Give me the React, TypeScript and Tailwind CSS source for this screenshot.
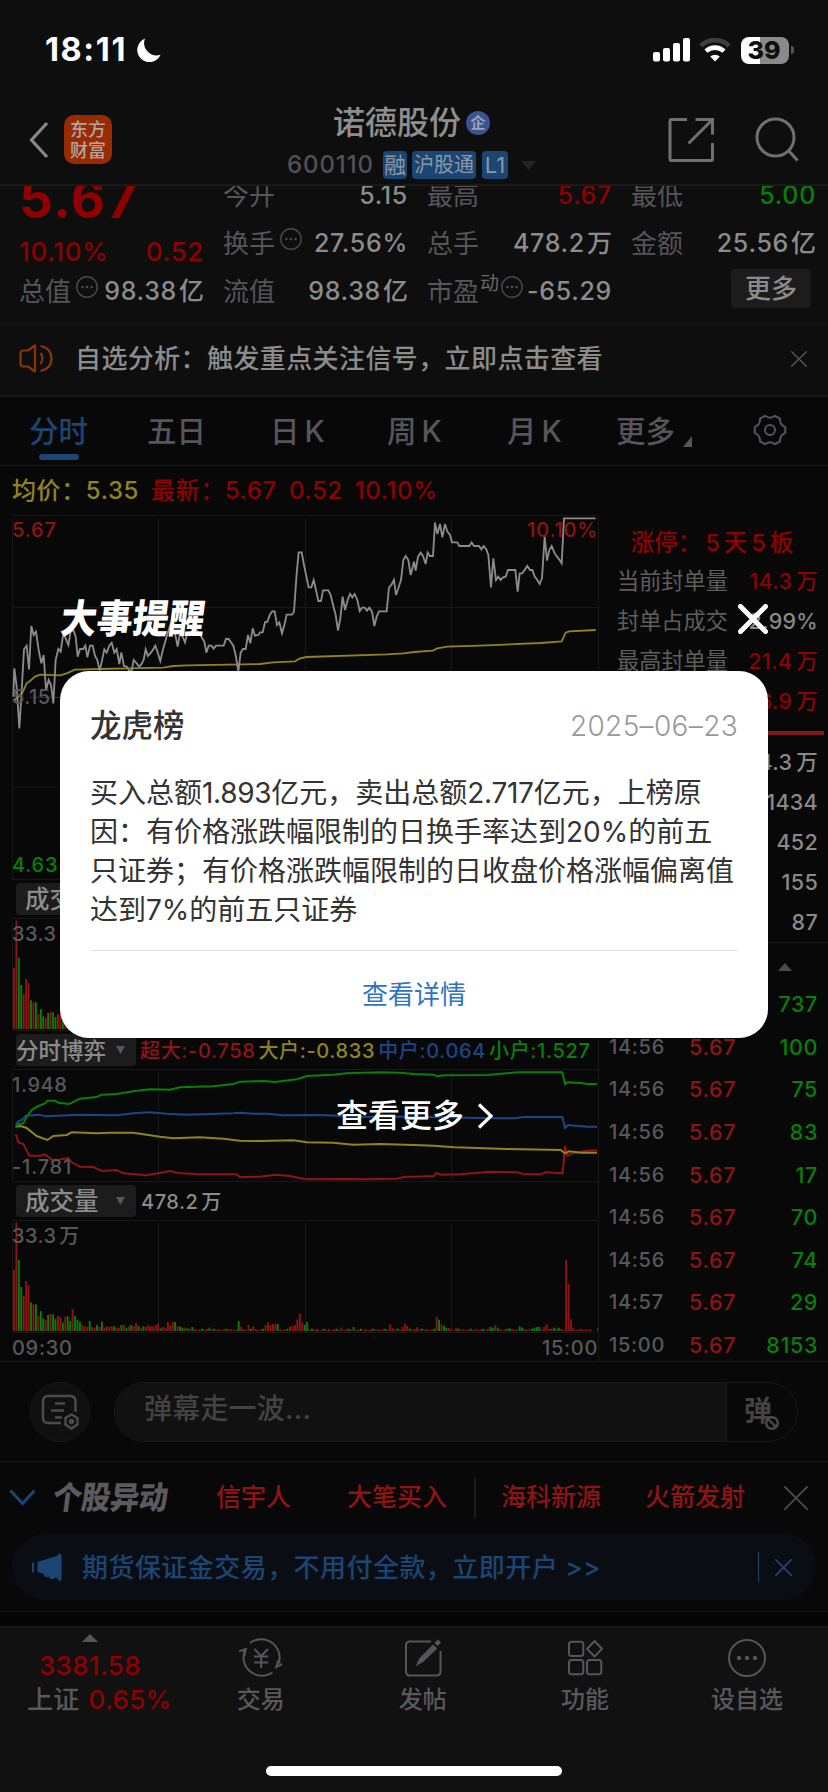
import type { ReactNode } from "react";

type Quote = { label: string; value: string; unit?: string; tone?: string; info?: boolean; sup?: string };

const RED = "text-[#8f0000]";
const GREEN = "text-[#068006]";

const quoteColumns: Quote[][] = [
  [
    { label: "今开", value: "5.15" },
    { label: "换手", value: "27.56%", info: true },
    { label: "流值", value: "98.38", unit: "亿" },
  ],
  [
    { label: "最高", value: "5.67", tone: RED },
    { label: "总手", value: "478.2", unit: "万" },
    { label: "市盈", value: "-65.29", info: true, sup: "动" },
  ],
];

const limitRows = [
  { label: "当前封单量", value: "14.3", unit: "万", tone: RED },
  { label: "封单占成交", value: "2.99%", unit: "", tone: "text-[#8a8a8a]" },
  { label: "最高封单量", value: "21.4", unit: "万", tone: RED },
  { label: "", value: "16.9", unit: "万", tone: RED },
];

const bookRows = [
  ["14.3", "万"],
  ["1434", ""],
  ["452", ""],
  ["155", ""],
  ["87", ""],
];

const ticks = [
  ["14:56", "5.67", "737"],
  ["14:56", "5.67", "100"],
  ["14:56", "5.67", "75"],
  ["14:56", "5.67", "83"],
  ["14:56", "5.67", "17"],
  ["14:56", "5.67", "70"],
  ["14:56", "5.67", "74"],
  ["14:57", "5.67", "29"],
  ["15:00", "5.67", "8153"],
];

const PRICE_AM =
  "40,590 43,505 50,560 58,685 64,590 72,448 80,437 87,508 94,378 101,405 108,395 116,450 124,490 131,465 138,570 146,540 153,555 160,610 167,480 175,447 182,455 190,400 197,415 205,435 212,395 220,390 227,410 233,470 240,447 250,447 256,437 262,472 270,437 278,437 285,468 292,480 299,512 306,482 313,448 320,458 328,437 335,428 343,458 350,447 358,492 364,457 372,498 380,500 388,512 395,513 401,480 410,490 418,500 426,490 431,480 437,448 444,468 455,455 466,437 474,460 481,483 489,448 497,420 503,400 512,372 520,390 526,405 533,440 540,400 548,410 555,427 562,400 575,395 590,390 605,412 613,425 619,458 626,437 634,437 641,446 648,437 671,437 678,417 686,417 693,427 700,437 707,465 715,515 722,458 729,447 737,447 744,405 751,430 758,385 765,407 775,405 780,397 788,397 795,367 802,365 810,343 817,334 824,334 831,375 838,367 846,400 853,375 860,344 876,344 882,335 890,220 896,157 905,157 912,195 926,262 934,262 941,240 948,270 955,303 963,303 969,271 985,271 992,285 1000,318 1007,345 1014,392 1021,355 1028,290 1035,330 1043,300 1050,282 1057,292 1064,282 1072,300 1079,333 1086,323 1094,323 1101,332 1108,323 1116,335 1123,378 1130,350 1137,334 1160,334 1167,262 1174,255 1182,240 1188,285 1196,262 1203,240 1210,180 1217,168 1225,180 1232,225 1242,185";
const PRICE_PM =
  "0,185 5,212 12,170 20,158 27,168 35,192 41,158 48,168 57,168 63,68 70,102 78,72 85,112 93,72 100,95 108,105 114,127 130,127 136,138 166,138 173,127 180,138 195,138 202,148 209,138 217,148 223,165 231,262 238,175 246,240 253,230 260,240 267,232 275,230 282,210 304,210 311,275 317,220 325,220 340,198 348,210 355,210 362,230 370,240 377,252 384,235 392,110 399,182 406,150 413,138 421,158 429,170 437,180 443,190 450,55 545,55";
const AVERAGE =
  "40,602 55,590 66,580 80,550 90,543 105,530 120,524 180,526 200,520 225,509 300,507 490,503 520,498 560,496 780,492 820,487 885,484 900,475 920,471 1160,463 1210,460 1242,456 1299,452 1312,445 1342,440 1462,436 1622,429 1685,424 1697,398 1707,394 1787,390";

const flows = [
  {
    color: "#8f1414",
    points:
      "47,342 55,367 70,372 88,407 120,407 135,403 160,422 205,414 215,427 240,440 280,441 305,453 350,450 370,460 440,466 475,460 510,453 535,459 600,463 710,463 720,472 780,470 825,464 870,468 915,478 1040,477 1100,478 1190,476 1215,470 1242,470 1302,468 1308,459 1327,464 1382,463 1472,455 1552,457 1572,463 1622,463 1637,457 1688,460 1695,378 1702,407 1717,400 1752,393 1791,391",
  },
  {
    color: "#8f8520",
    points:
      "47,320 62,318 80,324 110,348 142,360 160,348 200,345 215,337 290,340 330,338 400,338 480,350 520,355 600,352 670,356 720,362 780,363 880,361 920,367 1000,368 1060,374 1140,372 1242,375 1302,377 1362,382 1522,387 1682,390 1695,400 1707,394 1742,398 1791,398",
  },
  {
    color: "#1b4585",
    points:
      "47,315 55,303 65,300 78,287 120,284 135,289 240,284 350,286 400,280 450,277 500,281 560,284 700,280 720,278 760,281 800,281 850,286 960,285 1080,290 1242,290 1472,295 1542,295 1572,291 1687,291 1695,324 1704,315 1762,320 1791,320",
  },
  {
    color: "#068006",
    points:
      "47,322 55,312 70,310 80,290 95,270 115,258 135,250 143,242 165,242 175,248 208,252 240,236 290,231 305,224 350,222 400,214 450,208 510,209 540,202 640,199 700,192 720,185 790,183 825,186 890,178 920,168 1000,164 1040,160 1140,157 1200,158 1242,162 1302,164 1310,169 1332,166 1462,165 1552,157 1687,157 1695,192 1702,187 1742,189 1762,192 1791,192",
  },
];

// r = up minute, g = down minute
const OPENING =
  "r183 r325 g213 g132 r105 r150 r138 g86 r80 g80 r45 g60 g38 r33 g48 r51 g50 g36 r45 r42 g25 r43 g45 g30 r66 g46 g34 g28 r18 r14 r12 g30 r12 r10 g18 r12 g28 r10 r14 r12 r14 g14 r10 r9 g18 r18 g10 r14 g18 r15 r24 g15 r8 g14 r12 r18 r14 r14 r18 r22 g8 r12 r10 r27 r17 r27 g27 r14 g14 g10 r10 g8 r7 g12".split(
    " ",
  );
const SPIKES: Record<number, string> = {
  80: "g10", 92: "g30", 93: "r12", 96: "r18", 98: "r14", 103: "r18", 104: "r26", 105: "r18", 106: "r21", 107: "r21", 108: "g21",
  113: "r14", 114: "r14", 115: "r18", 116: "r34", 117: "r52", 118: "r26", 119: "g18", 120: "g27", 134: "r11", 139: "g12",
  154: "r20", 155: "r8", 159: "r12", 160: "r22", 161: "r15", 165: "r11", 173: "r43", 174: "g33", 175: "r20", 176: "g16",
  177: "g10", 178: "r9", 181: "r10", 195: "g12", 196: "g10", 197: "r17", 198: "g10", 203: "g8", 207: "g14", 208: "g10",
  213: "g10", 214: "g12", 215: "g12", 217: "r12", 218: "r20", 220: "r7", 221: "g10", 223: "g10", 226: "r213", 227: "r140",
  228: "r36", 229: "r10", 237: "r0", 238: "r0", 239: "r9",
};
const minutes = Array.from({ length: 240 }, (_, i) => {
  const code = OPENING[i] ?? SPIKES[i] ?? `${i % 5 === 2 && i < 222 ? "g" : "r"}${3 + ((i * 7) % 5)}`;
  return { up: code[0] === "r", height: Number(code.slice(1)) };
});

function Cross({ size, stroke, width }: { size: number; stroke: string; width: number }) {
  return (
    <svg width={size} height={size} viewBox={`0 0 ${size} ${size}`} stroke={stroke} strokeWidth={width} strokeLinecap="round">
      <path d={`M${width / 2} ${width / 2}L${size - width / 2} ${size - width / 2}M${size - width / 2} ${width / 2}L${width / 2} ${size - width / 2}`} />
    </svg>
  );
}

function InfoDot() {
  return (
    <svg width="22" height="22" viewBox="0 0 22 22" className="shrink-0">
      <circle cx="11" cy="11" r="10.2" fill="none" stroke="#4a4a4a" strokeWidth="1.4" />
      <g fill="#4a4a4a">
        <circle cx="6.4" cy="11" r="1.3" />
        <circle cx="11" cy="11" r="1.3" />
        <circle cx="15.6" cy="11" r="1.3" />
      </g>
    </svg>
  );
}

function QuoteRow({ q }: { q: Quote }) {
  return (
    <div className="flex h-12 items-center whitespace-nowrap pt-px">
      <span className="text-[26px] text-[#55555b]">{q.label}</span>
      {q.sup && <span className="mb-3.5 ml-px text-[19px] text-[#6a6a6a]">{q.sup}</span>}
      {q.info && (
        <span className={q.sup ? "mb-2.5 ml-0.5" : "mb-2.5 ml-[5px]"}>
          <InfoDot />
        </span>
      )}
      <span className={`ml-auto text-[25px] font-medium tracking-[0.7px] ${q.tone ?? "text-[#8c8c8c]"}`}>
        {q.value}
        {q.unit && <span className="ml-0.5 tracking-normal">{q.unit}</span>}
      </span>
    </div>
  );
}

function StatusBar() {
  return (
    <div className="flex h-[100px] shrink-0 items-center bg-[#0e0e0e] pl-[45px] pr-[34px] text-white">
      <span className="w-[83px] whitespace-nowrap text-[32.500px] font-bold tracking-[1.600px]">18:11</span>
      <svg width="25" height="25" viewBox="0 0 25 25" className="ml-2">
        <path d="M9 0.500A12.200 12.200 0 1 0 24.600 16.800A12.500 12.500 0 0 1 9 0.500Z" fill="#fff" />
      </svg>
      <svg width="37" height="24" viewBox="0 0 37 24" fill="#fff" className="ml-auto">
        <rect x="0" y="14" width="7" height="9.5" rx="2" />
        <rect x="10" y="10" width="7" height="13.5" rx="2" />
        <rect x="20" y="5" width="7" height="18.5" rx="2" />
        <rect x="30" y="0" width="7" height="23.5" rx="2" />
      </svg>
      <svg width="32" height="24" viewBox="0 0 32 24" fill="none" className="ml-[9px]">
        <path d="M1.800 7.800A20.500 20.500 0 0 1 30.200 7.800" stroke="#3e3e3e" strokeWidth="4.600" />
        <path d="M7 13.200A13 13 0 0 1 25 13.200" stroke="#fff" strokeWidth="4.600" />
        <path d="M11.200 18.600A7.500 7.500 0 0 1 20.800 18.600L16 23.400Z" fill="#fff" />
      </svg>
      <div className="ml-[10px] flex h-[27px] w-12 items-center justify-center rounded-[8px] bg-[linear-gradient(90deg,#fff_40%,#8a8a8a_40%)] pr-0.5">
        <span className="text-[25px] font-extrabold leading-none text-[#0e0e0e]">39</span>
      </div>
      <span className="ml-0.5 h-2 w-[3px] rounded-r-full bg-[#555]" />
    </div>
  );
}

function Header() {
  return (
    <div className="flex h-[86px] shrink-0 items-start justify-between border-b-2 border-[#191919] bg-[#0e0e0e] px-[29px]">
      <div className="flex w-[200px] items-center pt-[15px]">
        <svg width="20" height="38" viewBox="0 0 20 38" className="mr-[15px]" fill="none" stroke="#888" strokeWidth="3.2">
          <path d="M18 2L2.5 19L18 36" />
        </svg>
        <div className="flex h-[49px] w-12 flex-col items-center justify-center rounded-[10px] bg-[#992b03] text-[18px] font-medium leading-[21px] text-[#b0a6a1]">
          <span>东方</span>
          <span>财富</span>
        </div>
      </div>
      <div className="-ml-[5px] flex flex-col items-center">
        <div className="flex h-[45px] items-center">
          <span className="text-[32px] font-medium text-[#8e8e8e]">诺德股份</span>
          <span className="ml-[5px] flex size-6 items-center justify-center rounded-full bg-[#3b5391] text-[15px] font-bold leading-none text-[#a0a4b0]">
            企
          </span>
        </div>
        <div className="flex h-10 items-center text-[22px] text-[#8b97a5]">
          <span className="mr-[9px] text-[24px] font-medium tracking-[0.9px] text-[#515157]">600110</span>
          <span className="flex h-7 w-6 items-center justify-center rounded-[4px] bg-[#1b4573]">融</span>
          <span className="ml-[5px] flex h-7 w-16 items-center justify-center rounded-[4px] bg-[#1b4573] text-[20px]">沪股通</span>
          <span className="ml-[6px] flex h-7 w-[26px] items-center justify-center rounded-[4px] bg-[#1b4573]">L1</span>
          <svg width="15" height="9" viewBox="0 0 15 9" className="ml-[13px]">
            <path d="M0 0H15L7.5 9Z" fill="#242424" />
          </svg>
        </div>
      </div>
      <div className="flex w-[200px] items-start justify-end gap-[41px] pt-[17px]">
        <svg width="46" height="46" viewBox="0 0 46 46" fill="none" stroke="#707070" strokeWidth="3">
          <path d="M19 2.500H3.500Q2 2.500 2 4V42Q2 43.500 3.500 43.500H43Q44.500 43.500 44.500 42V26" />
          <path d="M27.500 2.500H44.500V17.500M43.500 3.500L20.500 26.500" />
        </svg>
        <svg width="44" height="46" viewBox="0 0 44 46" fill="none" stroke="#707070" strokeWidth="3">
          <circle cx="20.500" cy="20.500" r="18.500" />
          <path d="M33.500 33.500L42.500 43.500" />
        </svg>
      </div>
    </div>
  );
}

function QuotePanel() {
  return (
    <div className="flex h-[139px] shrink-0 gap-5 overflow-hidden border-b border-[#181818] bg-[#0e0e0e] pl-[19px]">
      <div className="-mt-[15px] w-[185px] shrink-0">
        <div className={`flex h-[58px] items-center text-[53px] font-bold tracking-[1.500px] ${RED}`}>5.67</div>
        <div className={`flex h-[42px] items-center justify-between pt-0.5 text-[26px] font-medium tracking-[0.600px] ${RED}`}>
          <span>10.10%</span>
          <span>0.52</span>
        </div>
        <div className="-mt-1">
          <QuoteRow q={{ label: "总值", value: "98.38", unit: "亿", info: true }} />
        </div>
      </div>
      {quoteColumns.map((col) => (
        <div key={col[0].label} className="-ml-px -mt-[15px] w-[185px] shrink-0">
          {col.map((q) => (
            <QuoteRow key={q.label} q={q} />
          ))}
        </div>
      ))}
      <div className="-ml-px -mt-[15px] w-[185px] shrink-0">
        <QuoteRow q={{ label: "最低", value: "5.00", tone: GREEN }} />
        <QuoteRow q={{ label: "金额", value: "25.56", unit: "亿" }} />
        <div className="ml-auto mr-[5px] mt-0.5 flex h-[39px] w-20 items-center justify-center rounded-[4px] bg-[#1c1c1c] text-[26px] font-medium text-[#8c8c8c]">
          更多
        </div>
      </div>
    </div>
  );
}

function Notice() {
  return (
    <div className="flex h-[72px] shrink-0 items-center border-b-2 border-[#181818] bg-[#0e0e0e] pb-[3px] pl-[19px] pr-[21px]">
      <svg width="35" height="29" viewBox="0 0 35 29" fill="none" stroke="#8a3507" strokeWidth="2.200">
        <path d="M16 1.500V27.500L9 22.500H4.500Q1.500 22.500 1.500 19.500V9.500Q1.500 6.500 4.500 6.500H9Z" strokeLinejoin="round" />
        <path d="M21.500 9Q25.500 14.500 21.500 20M21.500 2Q32.500 4.500 32.500 14.500Q32.500 24.500 21.500 27" />
      </svg>
      <span className="ml-[21px] text-[26px] font-medium tracking-[0.400px] text-[#8c8c8c]">自选分析：触发重点关注信号，立即点击查看</span>
      <span className="ml-auto">
        <Cross size={16} stroke="#555" width={1.4} />
      </span>
    </div>
  );
}

function PeriodTab({ unit, className }: { unit: string; className: string }) {
  return (
    <span className={`leading-[46px] ${className}`}>
      {unit}
      <span className="ml-[5px]">K</span>
    </span>
  );
}

function Tabs() {
  return (
    <div className="flex h-[69px] shrink-0 items-start border-b border-[#181818] pl-[29px] pt-[11px] text-[29.500px] font-medium text-[#55555b]">
      <div className="flex w-[118px] flex-col text-[#1b4573]">
        <span className="h-[46px] leading-[46px]">分时</span>
        <span className="ml-[10px] h-[6px] w-10 rounded-full bg-[#1b4573]" />
      </div>
      <span className="w-[123px] leading-[46px]">五日</span>
      <PeriodTab unit="日" className="w-[117px]" />
      <PeriodTab unit="周" className="w-[120px]" />
      <PeriodTab unit="月" className="w-[109px]" />
      <div className="flex w-[137px] items-end">
        <span className="leading-[46px]">更多</span>
        <svg width="9" height="11" viewBox="0 0 9 11" className="mb-[7px] ml-2">
          <path d="M9 0V11H0Z" fill="#55555b" />
        </svg>
      </div>
      <svg width="34" height="32" viewBox="0 0 34 32" className="mt-[6px]" fill="none" stroke="#55555b" strokeWidth="2" strokeLinejoin="round">
        <path d="M12 1.800Q17 5.500 22 1.800L27 4.600Q26.500 10.500 32.300 13.200V18.800Q26.500 21.500 27 27.400L22 30.200Q17 26.500 12 30.200L7 27.400Q7.500 21.500 1.700 18.800V13.200Q7.500 10.500 7 4.600Z" />
        <circle cx="17" cy="16" r="5" />
      </svg>
    </div>
  );
}

function GridLines({ y1, y2 }: { y1: number; y2: number }) {
  return (
    <g stroke="#181818" strokeWidth="3">
      <path d={`M37.500 ${y1}V${y2}M475.500 ${y1}V${y2}M916.500 ${y1}V${y2}M1354.500 ${y1}V${y2}`} />
    </g>
  );
}

function Selector({ children }: { children: ReactNode }) {
  return (
    <div className="ml-1 flex h-8 w-[120px] shrink-0 items-center rounded-[4px] bg-[#1c1c1c] pt-px text-[24.500px] font-medium text-[#8c8c8c]">
      {children}
      <svg width="9" height="8" viewBox="0 0 9 8" className="mb-px ml-auto mr-[11px]">
        <path d="M0 0H9L4.500 8Z" fill="#55555b" />
      </svg>
    </div>
  );
}

function VolumeChart() {
  return (
    <div className="relative h-[113px] border-y border-[#181818]">
      <svg width="586" height="111" viewBox="36 603 1758 333" className="block">
        <GridLines y1={609} y2={933} />
        {minutes.map((m, i) => (
          <rect key={i} x={39 + i * 7.33} y={933 - m.height} width={5.6} height={m.height} fill={m.up ? "#8f1414" : "#068006"} />
        ))}
      </svg>
      <span className="absolute left-0 top-px text-[20px] font-medium leading-7 tracking-[0.4px] text-[#58585c]">
        33.3<span className="ml-[3px]">万</span>
      </span>
    </div>
  );
}

function Charts() {
  return (
    <div className="w-[587px] shrink-0 border-r border-[#181818]">
      <div className="relative h-[365px] border-y border-[#181818]">
        <svg width="586" height="363" viewBox="36 48 1758 1089" className="block" fill="none">
          <GridLines y1={54} y2={1137} />
          <path d="M36 322.500H1794M36 861H1794" stroke="#181818" strokeWidth="3" />
          <path d="M90 592H1794" stroke="#333" strokeWidth="3" />
          <polyline points={AVERAGE} stroke="#8f8520" strokeWidth="5.500" />
          <polyline points={PRICE_AM} stroke="#8c8c8c" strokeWidth="5.500" />
          <polyline points={PRICE_PM} stroke="#8c8c8c" strokeWidth="5.500" transform="translate(1242 0)" />
        </svg>
        <span className="absolute left-0 top-0 text-[20px] font-medium leading-7 tracking-[0.8px] text-[#8f1414]">5.67</span>
        <span className="absolute right-0 top-0 text-[20px] font-medium leading-7 tracking-[0.8px] text-[#8f1414]">10.10%</span>
        <span className="absolute left-0 top-[167px] text-[20px] font-medium leading-7 tracking-[0.4px] text-[#58585c]">5.15</span>
        <span className="absolute left-0 top-[335px] text-[20px] font-medium leading-7 tracking-[0.8px] text-[#068006]">4.63</span>
      </div>
      <div className="flex h-[38px] items-center">
        <Selector>
          <span className="ml-[9px]">成交量</span>
        </Selector>
      </div>
      <VolumeChart />
      <div className="flex h-[38px] items-center text-[20px] font-medium">
        <Selector>
          <span className="text-[22.500px]">分时博弈</span>
        </Selector>
        <div className="ml-1 flex gap-[3px] whitespace-nowrap pt-px tracking-[0.650px]">
          <span className="text-[#8f1414]">超大:-0.758</span>
          <span className="text-[#8f8520]">大户:-0.833</span>
          <span className="text-[#1b4585]">中户:0.064</span>
          <span className="text-[#068006]">小户:1.527</span>
        </div>
      </div>
      <div className="relative h-[113px] border-y border-[#181818]">
        <svg width="586" height="111" viewBox="36 150 1758 333" className="block" fill="none">
          <GridLines y1={156} y2={480} />
          {flows.map((f) => (
            <polyline key={f.color} points={f.points} stroke={f.color} strokeWidth="6" />
          ))}
        </svg>
        <span className="absolute left-0 top-px text-[20px] font-medium leading-7 tracking-[0.6px] text-[#58585c]">1.948</span>
        <span className="absolute left-0 top-[83px] text-[20px] font-medium leading-7 tracking-[0.8px] text-[#58585c]">-1.781</span>
      </div>
      <div className="flex h-[38px] items-center">
        <Selector>
          <span className="ml-[9px]">成交量</span>
        </Selector>
        <span className="ml-[5px] pt-px text-[20px] font-medium tracking-[0.5px] text-[#8c8c8c]">
          478.2<span className="ml-[3px]">万</span>
        </span>
      </div>
      <VolumeChart />
      <div className="flex h-7 items-center justify-between pt-0.5 text-[20px] font-medium tracking-[0.7px] text-[#58585c]">
        <span>09:30</span>
        <span>15:00</span>
      </div>
    </div>
  );
}

function SidePanel() {
  return (
    <div className="flex flex-1 flex-col overflow-hidden border-t border-transparent pt-px">
      <div className={`flex h-11 shrink-0 items-center justify-center gap-1 pr-[3px] pt-[7px] text-[23.500px] font-medium ${RED}`}>
        <span>涨停：</span>
        <span>5</span>
        <span>天</span>
        <span>5</span>
        <span>板</span>
      </div>
      {limitRows.map((r) => (
        <div key={r.value} className="flex h-10 shrink-0 items-center justify-between pl-[18px] pr-[10px]">
          <span className="text-[22.200px] text-[#5e5e5e]">{r.label}</span>
          <span className={`text-[21.500px] font-medium tracking-[0.3px] ${r.tone}`}>
            {r.value}
            {r.unit && <span className="ml-1">{r.unit}</span>}
          </span>
        </div>
      ))}
      <div className="ml-1 mr-1 mt-[10px] h-1 shrink-0 bg-[#7d1a1a]" />
      <div className="mt-[7px] shrink-0 border-b border-[#181818]">
        {bookRows.map(([value, unit], i) => (
          <div key={i} className="flex h-10 items-center justify-end pr-[10px] pt-px text-[21.500px] font-medium tracking-[0.3px] text-[#8a8a8a]">
            {value}
            {unit && <span className="ml-1">{unit}</span>}
          </div>
        ))}
      </div>
      <div className="flex h-10 shrink-0 items-center justify-end pr-9 pt-2">
        <svg width="14" height="8" viewBox="0 0 14 8">
          <path d="M7 0L14 8H0Z" fill="#4c4c50" />
        </svg>
      </div>
      {ticks.map(([time, price, lots], i) => (
        <div key={i} className="flex h-[42.600px] shrink-0 items-center pl-[10px] pr-[10px]">
          <span className="w-20 text-[20px] font-medium tracking-[0.7px] text-[#58585c]">{time}</span>
          <span className="text-[21.500px] font-medium tracking-[0.7px] text-[#8f1414]">{price}</span>
          <span className={`ml-auto text-[21.500px] font-medium tracking-[0.6px] ${GREEN}`}>{lots}</span>
        </div>
      ))}
    </div>
  );
}

function BulletBar() {
  return (
    <div className="flex h-[100px] shrink-0 items-center border-b border-[#181818] pl-[30px] pr-[30px]">
      <div className="flex size-[60px] items-center justify-center rounded-full border border-[#191919] bg-[#101010]">
        <svg width="38" height="36" viewBox="0 0 38 36" fill="none" stroke="#4b4b4b" strokeWidth="2.400">
          <path d="M20 29H7Q2 29 2 24V7Q2 2 7 2H29Q34.500 2 34.500 7V18" />
          <path d="M14 9.500H24M10 16.500H23M14 23.500H21" />
          <path d="M30.500 20.500L36.500 24V30.500L30.500 34.500L24.500 30.500V24Z" />
          <circle cx="30.500" cy="27.500" r="1.500" />
        </svg>
      </div>
      <div className="ml-6 flex h-[60px] flex-1 overflow-hidden rounded-full border border-[#191919]">
        <div className="flex flex-1 items-center bg-[#111] pb-[5px] pl-[29px] text-[28px] font-medium tracking-[0.200px] text-[#434343]">
          弹幕走一波...
        </div>
        <div className="relative w-[71px] border-l border-[#191919] pl-[17px] pt-[8px] text-[28px] font-bold leading-[40px] text-[#434343]">
          弹
          <svg width="16" height="16" viewBox="0 0 16 16" className="absolute left-[37px] top-[32px]" fill="#080808" stroke="#4b4b4b" strokeWidth="2.400">
            <circle cx="8" cy="8" r="5.800" />
            <path d="M4 4L12 12" />
          </svg>
        </div>
      </div>
    </div>
  );
}

function Movers() {
  return (
    <div className="flex h-[72px] shrink-0 items-center pl-[9px] pr-5 text-[25px] font-medium text-[#8f1414]">
      <svg width="27" height="17" viewBox="0 0 27 17" fill="none" stroke="#1b4573" strokeWidth="3" className="mb-0.5">
        <path d="M1.500 1.500L13.500 14.500L25.500 1.500" />
      </svg>
      <span className="ml-[17px] w-[163px] text-[#5a5a5f]">
        <span className="inline-block -skew-x-[8deg] scale-y-[1.1] text-[29px] font-black tracking-[-0.3px]">个股异动</span>
      </span>
      <span className="w-[131px]">信宇人</span>
      <span className="w-[127px]">大笔买入</span>
      <span className="h-10 w-0.5 bg-[#1c1c1c]" />
      <span className="ml-[25px] w-[144px]">海科新源</span>
      <span>火箭发射</span>
      <span className="ml-auto">
        <Cross size={24} stroke="#4c4c4c" width={1.8} />
      </span>
    </div>
  );
}

function PromoBanner() {
  return (
    <div className="mx-3 flex h-[66px] shrink-0 items-center rounded-full bg-[#0a0e14] pl-5 pr-6 text-[#1b4573]">
      <svg width="30" height="27" viewBox="0 0 30 27" fill="#1b4573">
        <path d="M0 8.500H2V18.500H0ZM5.500 8L26 1.500V0H29.500V26.500H26V24.500L23.500 23.500Q21 26 18.500 25L16.500 22.500Q13.500 24.500 12 21.500L11 19.500L5.500 18Z" />
      </svg>
      <span className="ml-5 text-[26px] font-medium tracking-[0.450px]">期货保证金交易，不用付全款，立即开户 &gt;&gt;</span>
      <span className="ml-auto h-[30px] w-px bg-[#1b4573]" />
      <span className="ml-4">
        <Cross size={17} stroke="#1b4573" width={1.8} />
      </span>
    </div>
  );
}

function NavItem({ label, children }: { label: string; children: ReactNode }) {
  return (
    <div className="flex w-[162.300px] flex-col items-center pt-[10px]">
      <svg width="44" height="40" viewBox="0 0 44 40" fill="none" stroke="#55555a" strokeWidth="2">
        {children}
      </svg>
      <span className="mt-[5px] text-[24px] font-medium leading-[34px] text-[#58585d]">{label}</span>
    </div>
  );
}

function BottomNav() {
  return (
    <div className="flex flex-1 border-t border-[#191919] bg-[#111] pt-px">
      <div className={`flex w-[180px] flex-col items-center text-[26px] font-medium tracking-[0.300px] ${RED}`}>
        <svg width="16" height="8" viewBox="0 0 16 8" className="mt-1.5">
          <path d="M8 0L16 8H0Z" fill="#55555a" />
        </svg>
        <span className="mt-1.5 leading-[36px]">3381.58</span>
        <div className="-mt-px flex w-full gap-[9px] pl-[27px] leading-[34px]">
          <span className="text-[#58585d]">上证</span>
          <span>0.65%</span>
        </div>
      </div>
      <NavItem label="交易">
        <path d="M11 5A18.500 18.500 0 0 1 39.700 25.500M33.500 34.500A18.500 18.500 0 0 1 6.700 10.500M0 13.300L6.700 11.200L5.300 18M43 26L37.300 29L39.200 22.500" />
        <path d="M15.500 11L22.200 18L29 11M15 18.500H29.300M15 24.500H29.300M22.200 18V30" />
      </NavItem>
      <NavItem label="发帖">
        <path d="M30 3.500H9Q5 3.500 5 7.500V33.500Q5 37.500 9 37.500H35.500Q39.500 37.500 39.500 33.500V13" />
        <path d="M32 8L19 21L16.800 25.800L21.500 23.200L34.800 10.500Z" fill="#55555a" />
        <path d="M35 6.500L38.500 3" strokeWidth="4.500" />
      </NavItem>
      <NavItem label="功能">
        <rect x="6" y="3.800" width="14.300" height="14.300" rx="2.500" />
        <rect x="6" y="22" width="14.300" height="14.300" rx="2.500" />
        <rect x="24" y="22" width="14.300" height="14.300" rx="2.500" />
        <path d="M31.500 3L39 10.700L31.500 18.500L24 10.700Z" strokeLinejoin="round" />
      </NavItem>
      <NavItem label="设自选">
        <circle cx="22" cy="20" r="18" />
        <g fill="#55555a" stroke="none">
          <circle cx="14" cy="20" r="2.200" />
          <circle cx="22" cy="20" r="2.200" />
          <circle cx="30" cy="20" r="2.200" />
        </g>
      </NavItem>
    </div>
  );
}

function EventDialog() {
  return (
    <div className="absolute inset-0 flex flex-col px-[60px] pt-[591px]">
      <div className="flex h-20 shrink-0 items-start justify-between">
        <span className="inline-block -skew-x-[8deg] scale-y-[1.1] pl-px text-[36px] font-black leading-[56px] text-white">大事提醒</span>
        <span className="mt-[13px]">
          <Cross size={30} stroke="#fff" width={5} />
        </span>
      </div>
      <div className="h-[367px] shrink-0 rounded-[29px] bg-white px-[30px] text-[#333]">
        <div className="flex h-[103px] items-center justify-between pt-[6px]">
          <span className="text-[31.500px] font-medium">龙虎榜</span>
          <span className="text-[28px] font-light tracking-[0.350px] text-[#999]">2025–06–23</span>
        </div>
        <div className="h-[177px] whitespace-nowrap border-b border-[#e3e3e3] text-[28px] leading-[39px]">
          <p>
            买入总额<span className="tracking-[-0.3px]">1.893</span>亿元，卖出总额<span className="tracking-[-0.3px]">2.717</span>亿元，上榜原
          </p>
          <p>因：有价格涨跌幅限制的日换手率达到20%的前五</p>
          <p>只证券；有价格涨跌幅限制的日收盘价格涨幅偏离值</p>
          <p>达到7%的前五只证券</p>
        </div>
        <div className="flex h-[87px] items-center justify-center text-[26px] text-[#2f73c6]">查看详情</div>
      </div>
      <div className="mt-[54px] flex items-center justify-center pl-0.5 text-[32px] font-medium leading-[48px] text-white">
        查看更多
        <svg width="17" height="26" viewBox="0 0 17 26" fill="none" stroke="#fff" strokeWidth="3.200" className="ml-[13px]">
          <path d="M2 1.500L14 13L2 24.500" />
        </svg>
      </div>
    </div>
  );
}

export default function App() {
  return (
    <main className="relative flex h-[1792px] w-[828px] flex-col overflow-hidden bg-[#080808] font-['Inter','Noto_Sans_CJK_SC',sans-serif]">
      <StatusBar />
      <Header />
      <QuotePanel />
      <Notice />
      <Tabs />
      <div className={`flex h-[49px] shrink-0 items-center pl-3 text-[24px] font-medium tracking-[0.6px] ${RED}`}>
        <span className="mr-3 text-[#8f8520]">均价：5.35</span>
        <span>最新：5.67</span>
        <span className="ml-3">0.52</span>
        <span className="ml-3">10.10%</span>
      </div>
      <div className="flex h-[847px] shrink-0 border-b border-[#181818] pl-3">
        <Charts />
        <SidePanel />
      </div>
      <BulletBar />
      <Movers />
      <PromoBanner />
      <div className="h-3 shrink-0 border-b border-[#181818]" />
      <div className="h-[14px] shrink-0 bg-[#050505]" />
      <BottomNav />
      <EventDialog />
      <span className="absolute bottom-4 left-[266px] h-[10px] w-[296px] rounded-full bg-white" />
    </main>
  );
}
